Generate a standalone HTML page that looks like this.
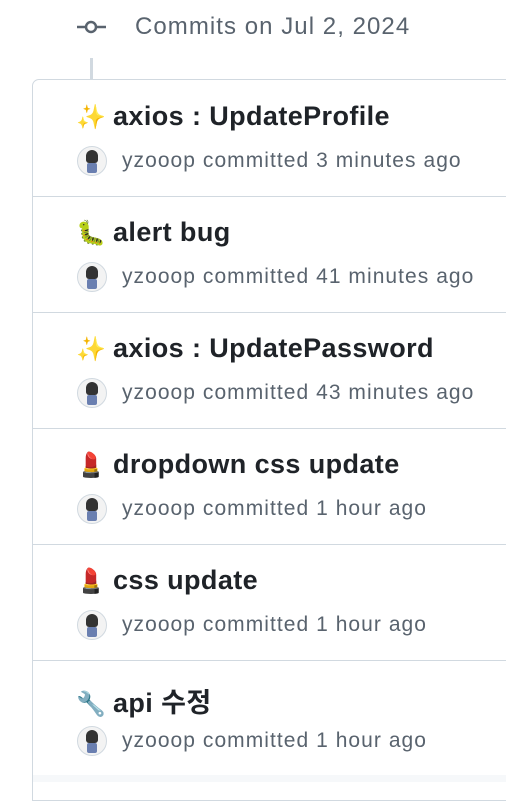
<!DOCTYPE html>
<html><head><meta charset="utf-8"><style>
body{margin:0;width:506px;height:782px;overflow:hidden;background:#fff;font-family:"Liberation Sans","Noto Sans CJK KR",sans-serif;position:relative}
.hdr{position:absolute;left:135px;top:13px;font-size:24px;letter-spacing:1.05px;color:#59636e}
.ico{position:absolute;left:77px;top:19px}
.vl{position:absolute;left:90px;top:58px;width:3px;height:21px;background:#d1d9e0}
.box{position:absolute;left:32px;top:79px;width:500px;height:720px;border:1px solid #d1d9e0;border-radius:7px 0 0 0;background:#fff}
.row{position:absolute;left:0;width:100%;height:116px;border-bottom:1px solid #d1d9e0}
.t{position:absolute;left:43px;top:21px;font-size:27px;letter-spacing:0.4px;font-weight:600;color:#1f2328;white-space:nowrap}
.e{display:inline-block;width:37px;font-weight:400;font-size:24px}
.m{position:absolute;left:89px;top:69px;font-size:21px;letter-spacing:1.05px;color:#59636e;white-space:nowrap}
.av{position:absolute;left:44px;top:66px;width:28px;height:28px;border-radius:50%;border:1px solid #d1d9e0;background:#f3f3f3;overflow:hidden}
.av:before{content:"";position:absolute;left:8px;top:3px;width:12px;height:13px;border-radius:6px 6px 3px 3px;background:#333}
.av:after{content:"";position:absolute;left:9px;top:16px;width:10px;height:10px;background:#6a7fb0;border-radius:2px}
.bottom{position:absolute;left:33px;top:775px;width:480px;height:7px;background:#f6f8fa}
</style></head><body>
<svg class="ico" width="30" height="16" viewBox="0 0 30 16"><line x1="0" y1="8" x2="8" y2="8" stroke="#59636e" stroke-width="2.5"/><circle cx="14" cy="8" r="5" fill="none" stroke="#59636e" stroke-width="2.5"/><line x1="20" y1="8" x2="29" y2="8" stroke="#59636e" stroke-width="2.5"/></svg>
<div class="hdr">Commits on Jul 2, 2024</div>
<div class="vl"></div>
<div class="box">
<div class="row" style="top:0"><div class="t"><span class="e" style="color:#f4b400">✨</span>axios : UpdateProfile</div><div class="av"></div><div class="m">yzooop committed 3 minutes ago</div></div>
<div class="row" style="top:116px"><div class="t"><span class="e" style="color:#7a9a20">🐛</span>alert bug</div><div class="av"></div><div class="m">yzooop committed 41 minutes ago</div></div>
<div class="row" style="top:232px"><div class="t"><span class="e" style="color:#f4b400">✨</span>axios : UpdatePassword</div><div class="av"></div><div class="m">yzooop committed 43 minutes ago</div></div>
<div class="row" style="top:348px"><div class="t"><span class="e" style="color:#c0282e">💄</span>dropdown css update</div><div class="av"></div><div class="m">yzooop committed 1 hour ago</div></div>
<div class="row" style="top:464px"><div class="t"><span class="e" style="color:#c0282e">💄</span>css update</div><div class="av"></div><div class="m">yzooop committed 1 hour ago</div></div>
<div class="row" style="top:580px"><div class="t"><span class="e" style="color:#888">🔧</span>api 수정</div><div class="av"></div><div class="m">yzooop committed 1 hour ago</div></div>
</div>
<div class="bottom"></div>
</body></html>
